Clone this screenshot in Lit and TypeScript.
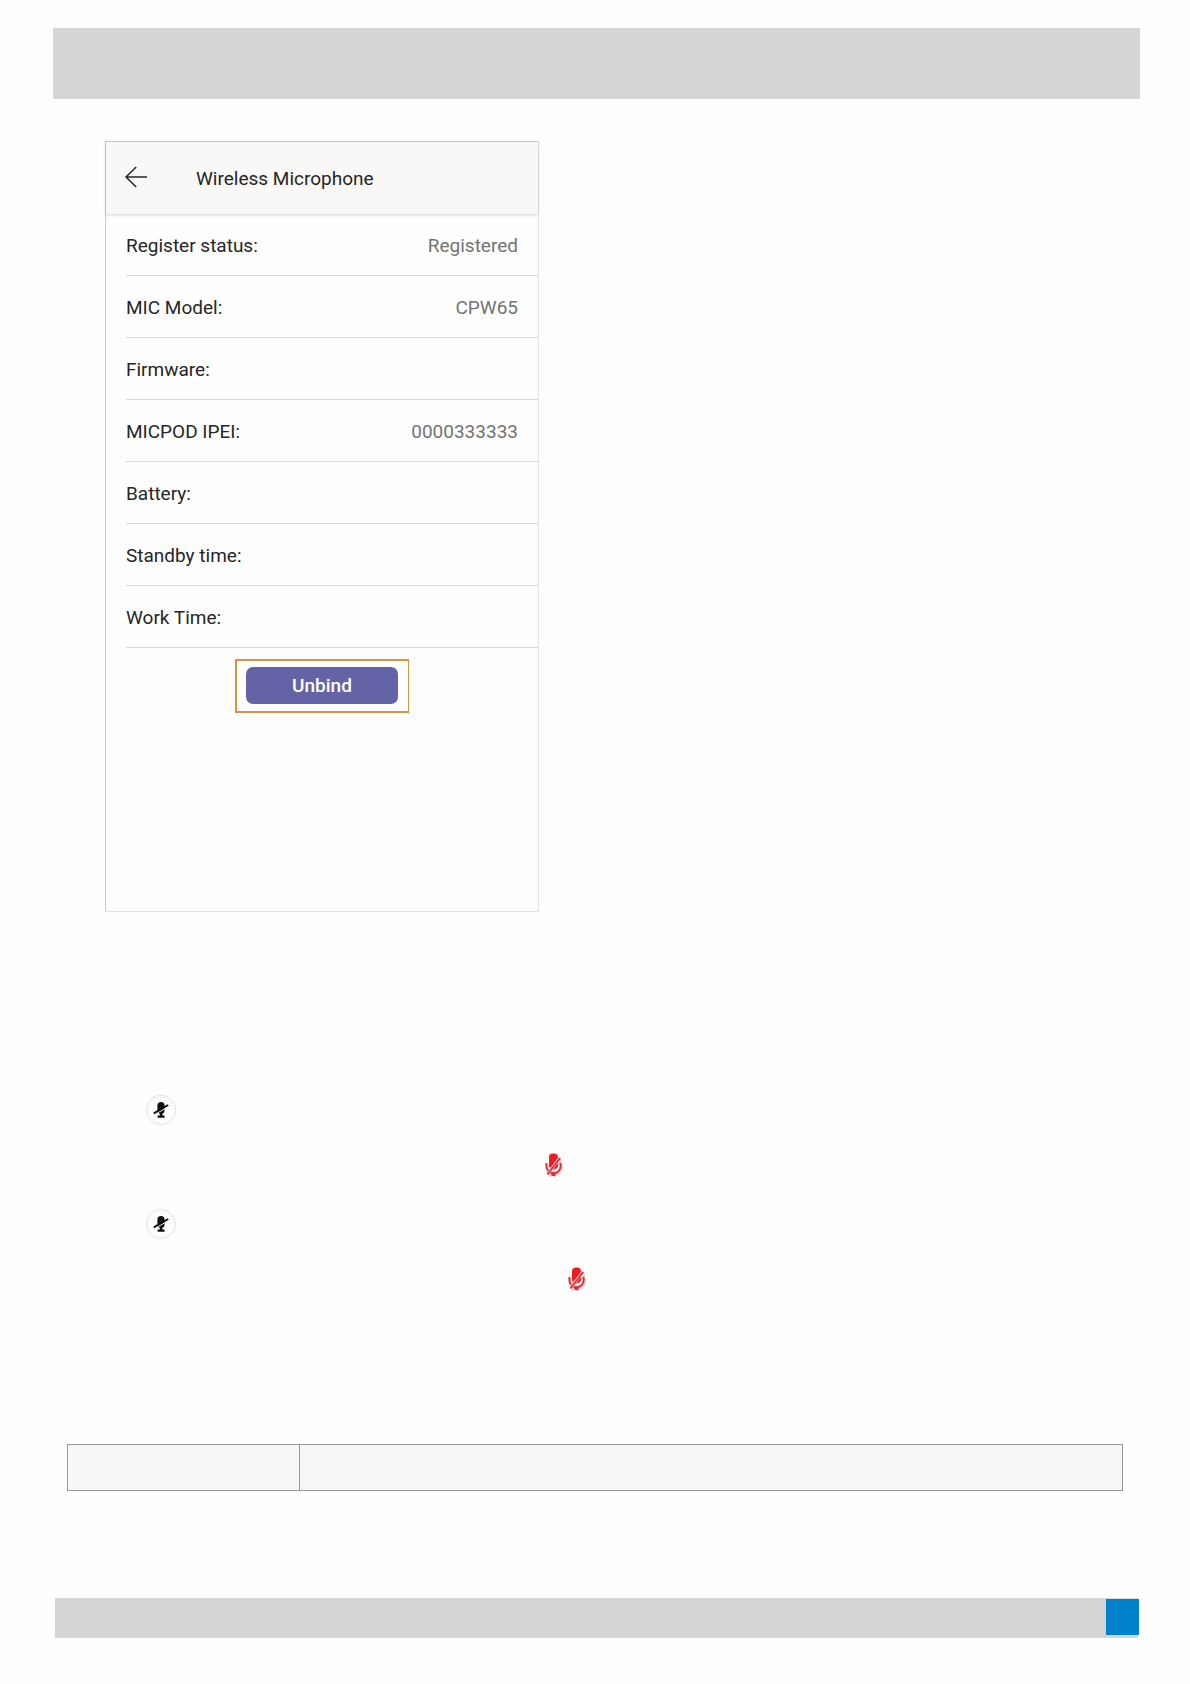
import { LitElement, html, css, svg } from "lit";
import { customElement, property } from "lit/decorators.js";

interface Field {
  label: string;
  value: string;
}

const FIELDS: Field[] = [
  { label: "Register status:", value: "Registered" },
  { label: "MIC Model:", value: "CPW65" },
  { label: "Firmware:", value: "" },
  { label: "MICPOD IPEI:", value: "0000333333" },
  { label: "Battery:", value: "" },
  { label: "Standby time:", value: "" },
  { label: "Work Time:", value: "" },
];

@customElement("microphone-panel")
export class MicrophonePanel extends LitElement {
  @property({ attribute: false }) fields: Field[] = [];

  static styles = css`
    :host {
      display: block;
      box-sizing: border-box;
      min-height: 771px;
      border: 1px solid #e2e2e2;
      border-top-color: #cbcbcb;
      border-left-color: #cbcbcb;
      background: #fefefe;
      font: 19px/24px Roboto, "Liberation Sans", sans-serif;
      color: #262626;
    }
    .head {
      display: flex;
      align-items: center;
      gap: 48px;
      box-sizing: border-box;
      height: 72px;
      padding: 0 0 2px 18px;
      background: #f9f8f6;
      box-shadow: 0 1px 3px rgba(0, 0, 0, 0.18);
    }
    .back {
      display: flex;
      padding: 0;
      border: 0;
      background: none;
      color: inherit;
    }
    .title {
      margin: 0;
      padding-top: 3px;
      font-size: inherit;
      font-weight: 400;
    }
    .fields {
      margin: 0;
      padding: 0 0 0 20px;
    }
    .field {
      display: flex;
      justify-content: space-between;
      align-items: center;
      box-sizing: border-box;
      height: 62px;
      padding: 2px 20px 0 0;
      border-bottom: 1px solid #d9d9d9;
    }
    .value {
      margin: 0;
      color: #737373;
    }
    .highlight {
      width: fit-content;
      margin: 11px auto 0;
      padding: 6px 10px 7px 9px;
      border: 2px solid #dc9340;
      border-right-width: 1px;
    }
    .unbind {
      display: block;
      width: 152px;
      height: 37px;
      padding: 0;
      border: 0;
      border-radius: 7px;
      background: #6463a5;
      color: #fff;
      font: 500 19px/37px Roboto, "Liberation Sans", sans-serif;
    }
  `;

  render() {
    return html`
      <header class="head">
        <button class="back" aria-label="Back">
          <svg width="24" height="24" viewBox="0 0 24 24" fill="none" stroke="currentColor" stroke-width="1.5">
            <path d="M23 12H1.8M12.2 2L2 12L12.2 22" />
          </svg>
        </button>
        <h1 class="title">Wireless Microphone</h1>
      </header>
      <dl class="fields">
        ${this.fields.map(
          (f) => html`<div class="field"><dt>${f.label}</dt><dd class="value">${f.value}</dd></div>`
        )}
      </dl>
      <div class="highlight"><button class="unbind">Unbind</button></div>
    `;
  }
}

const mutedGlyph = svg`
  <circle cx="15" cy="15" r="14.8" fill="#fefefe" stroke="#e4e4e4" />
  <circle cx="15" cy="15" r="13" fill="none" stroke="#f3f3f3" />
  <path d="M11.4 10.5a3.6 3.6 0 0 1 7.2 0v5a3.6 3.6 0 0 1-2.2 3.3v1.7h2.2v2.3h-7v-2.3h2.2v-1.7a3.6 3.6 0 0 1-2.4-3.3z" fill="#111" />
  <path d="M8.4 19.6L22.6 11.6" stroke="#fefefe" stroke-width="1" />
  <path d="M7.8 18.4L22.2 10" stroke="#111" stroke-width="2" />
`;

const redGlyph = svg`
  <g transform="translate(1.2 1.2)" fill="none" stroke="#bdb5b5" stroke-width="2.4" opacity="0.6">
    <path d="M1.6 10v3.5a7 7 0 0 0 14 0V10M8.6 20.5V23M3 22.5L15.5 6" />
  </g>
  <rect x="4" y="0.5" width="9" height="15.5" rx="4" fill="#ec1c24" />
  <path d="M1.4 10v3.2a7.1 7.1 0 0 0 14.2 0V10M8.5 20.2v2M6.5 22h4" fill="none" stroke="#d8353b" stroke-width="2" />
  <path d="M2.4 21.2L15 4.8" stroke="#f0b4b4" stroke-width="3.2" />
  <path d="M2.4 21.6L15.2 5" stroke="#c8383c" stroke-width="1.6" />
`;

@customElement("app-root")
export class AppRoot extends LitElement {
  static styles = css`
    :host {
      display: block;
      background: #fefefe;
    }
    .page {
      display: flex;
      flex-direction: column;
      box-sizing: border-box;
      min-height: 100vh;
      padding: 28px 50px 46px 53px;
    }
    .banner {
      height: 71px;
      background: #d5d5d5;
    }
    .panel {
      width: 434px;
      max-width: calc(100% - 52px);
      margin: 42px 0 0 52px;
    }
    .steps {
      display: flex;
      flex-direction: column;
      gap: 32px;
      margin: 183px 0 0;
      padding: 0;
      list-style: none;
    }
    .step {
      display: flex;
      flex-direction: column;
      gap: 28px;
    }
    .glyph {
      display: block;
      overflow: visible;
    }
    .tap {
      align-self: flex-start;
      margin-left: 93px;
      padding: 0;
      border: 0;
      background: none;
    }
    .state {
      margin-left: 492px;
    }
    .state.far {
      margin-left: 515px;
    }
    .grid {
      width: calc(100% - 31px);
      height: 47px;
      margin: 153px 0 0 14px;
      border-collapse: collapse;
      table-layout: fixed;
      background: #f7f7f7;
    }
    .cell {
      padding: 0;
      border: 1px solid #979797;
    }
    .name {
      width: 231px;
    }
    .footer {
      display: flex;
      justify-content: flex-end;
      height: 40px;
      margin: auto 2px 0;
      background: #d5d5d5;
    }
    .number {
      width: 33px;
      height: 36px;
      margin: 1px -1px 0 0;
      background: #0082ca;
    }
  `;

  private step(far: boolean) {
    return html`
      <li class="step">
        <button class="tap" aria-label="Mute">
          <svg class="glyph" width="30" height="30" viewBox="0 0 30 30">${mutedGlyph}</svg>
        </button>
        <svg class="glyph state ${far ? "far" : ""}" width="18" height="24" viewBox="0 0 18 24">${redGlyph}</svg>
      </li>
    `;
  }

  render() {
    return html`
      <div class="page">
        <header class="banner"></header>
        <microphone-panel class="panel" .fields=${FIELDS}></microphone-panel>
        <ol class="steps">${this.step(false)}${this.step(true)}</ol>
        <table class="grid">
          <tbody>
            <tr><td class="cell name"></td><td class="cell"></td></tr>
          </tbody>
        </table>
        <footer class="footer"><div class="number"></div></footer>
      </div>
    `;
  }
}
